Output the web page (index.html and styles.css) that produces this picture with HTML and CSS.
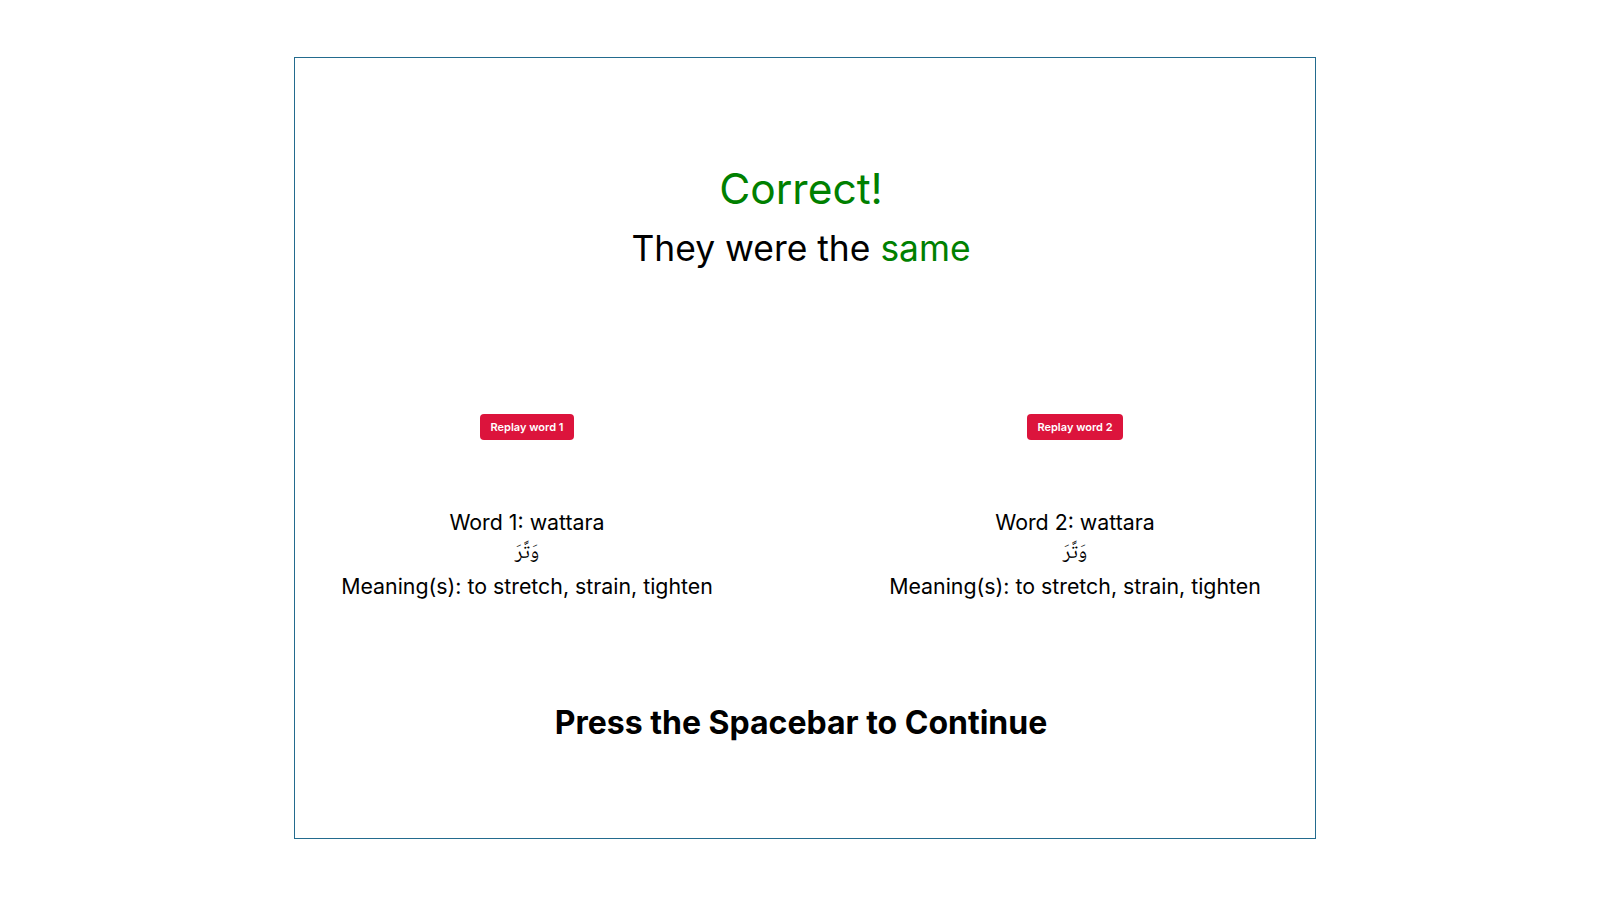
FILE: index.html
```html
<!DOCTYPE html>
<html lang="en">
<head>
<meta charset="utf-8">
<title>Result</title>
<link rel="stylesheet" href="styles.css">
</head>
<body>
<div class="frame">
  <div class="content">
    <h1 class="verdict">Correct!</h1>
    <h2 class="summary">They were the <span class="ok">same</span></h2>
    <div class="words">
      <div class="word">
        <button class="replay">Replay word 1</button>
        <div class="info">
          <div class="line">Word 1: wattara</div>
          <div class="line arabic" lang="ar" dir="rtl">وَتَّرَ</div>
          <div class="line">Meaning(s): to stretch, strain, tighten</div>
        </div>
      </div>
      <div class="word">
        <button class="replay">Replay word 2</button>
        <div class="info">
          <div class="line">Word 2: wattara</div>
          <div class="line arabic" lang="ar" dir="rtl">وَتَّرَ</div>
          <div class="line">Meaning(s): to stretch, strain, tighten</div>
        </div>
      </div>
    </div>
    <p class="continue">Press the Spacebar to Continue</p>
  </div>
</div>
</body>
</html>
```

FILE: styles.css
```css
html, body {
  margin: 0;
  padding: 0;
  background: #ffffff;
}
body {
  font-family: Inter, "Noto Sans", "DejaVu Sans", sans-serif;
  color: #000000;
}
.frame {
  box-sizing: border-box;
  margin: 57px 0 0 294px;
  width: 1022px;
  height: 782px;
  border: 1px solid #236b8e;
  padding-right: 8px;
}
.content {
  display: flex;
  flex-direction: column;
  align-items: center;
  text-align: center;
}
.verdict {
  margin: 106px 0 0;
  font-size: 42.5px;
  line-height: 50px;
  font-weight: 400;
  color: #008000;
}
.summary {
  margin: 13px 0 0;
  font-size: 35.4px;
  line-height: 43px;
  font-weight: 400;
}
.ok {
  color: #008000;
}
.words {
  display: flex;
  justify-content: center;
  gap: 108px;
  margin-top: 144px;
}
.word {
  width: 440px;
  display: flex;
  flex-direction: column;
  align-items: center;
}
.replay {
  height: 26px;
  padding: 0 10.5px;
  border: none;
  border-radius: 4px;
  background: #dc143c;
  color: #ffffff;
  font-family: Inter, "Noto Sans", sans-serif;
  font-size: 11px;
  font-weight: 600;
}
.info {
  margin-top: 65.5px;
  font-size: 21.33px;
}
.line {
  line-height: 32px;
}
.arabic {
  font-family: "Noto Naskh Arabic", "Noto Sans Arabic", "DejaVu Sans", sans-serif;
  font-size: 20px;
}
.continue {
  margin: 102px 0 0;
  font-size: 32px;
  line-height: 38px;
  font-weight: 700;
}
```
